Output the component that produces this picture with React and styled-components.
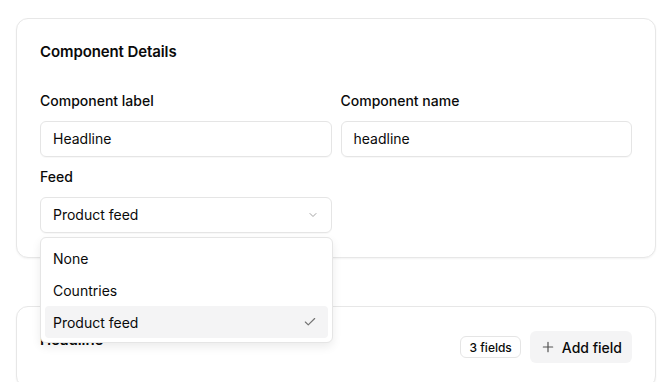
import { useState } from 'react'
import styled, { createGlobalStyle } from 'styled-components'

const Global = createGlobalStyle`
  html, body { margin: 0; padding: 0; background: #ffffff; }
  body { font-family: Inter, "Noto Sans", sans-serif; color: #0a0a0a; -webkit-font-smoothing: antialiased; }
  * { box-sizing: border-box; }
`

const Page = styled.div`
  display: flex;
  flex-direction: column;
  gap: 48px;
  padding: 18px 13px 0 16px;
  height: 382px;
  overflow: hidden;
`

const Card = styled.section`
  background: #fff;
  border: 1px solid #e7e7e7;
  border-radius: 12px;
  box-shadow: 0 1px 2px rgba(0, 0, 0, 0.05);
  padding: 23px 23px 24px;
  display: flex;
  flex-direction: column;
`

const CardHeader = styled.div`
  display: flex;
  align-items: flex-start;
  justify-content: space-between;
  min-height: 20px;
`

const Title = styled.h2`
  margin: 0;
  font-size: 15px;
  font-weight: 600;
  line-height: 20px;
  letter-spacing: -0.1px;
`

const Grid = styled.div`
  display: grid;
  grid-template-columns: 1fr 1fr;
  column-gap: 9px;
  row-gap: 10px;
  margin-top: 29px;
`

const Field = styled.div`
  display: flex;
  flex-direction: column;
  gap: 10px;
  position: relative;
`

const Label = styled.label`
  font-size: 14px;
  font-weight: 500;
  line-height: 20px;
`

const Input = styled.div`
  height: 36px;
  border: 1px solid #e5e5e5;
  border-radius: 6px;
  padding: 0 12px;
  display: flex;
  align-items: center;
  justify-content: space-between;
  font-size: 14px;
  line-height: 20px;
  box-shadow: 0 1px 1px rgba(0, 0, 0, 0.03);
`

const Menu = styled.div`
  position: absolute;
  top: 70px;
  left: 0;
  width: 293px;
  background: #fff;
  border: 1px solid #e5e5e5;
  border-radius: 6px;
  box-shadow: 0 4px 10px rgba(0, 0, 0, 0.08);
  padding: 4px;
  z-index: 10;
`

const Option = styled.div`
  height: 32px;
  display: flex;
  align-items: center;
  justify-content: space-between;
  padding: 0 11px 0 8px;
  border-radius: 4px;
  font-size: 14px;
  background: ${p => (p.$active ? '#f4f4f5' : 'transparent')};
`

const Actions = styled.div`
  display: flex;
  align-items: center;
  gap: 9px;
  margin-top: 1px;
`

const Badge = styled.span`
  height: 22px;
  padding: 0 8px 0 9px;
  border: 1px solid #e5e5e5;
  border-radius: 6px;
  font-size: 12px;
  font-weight: 500;
  display: flex;
  align-items: center;
`

const Button = styled.button`
  height: 32px;
  border: 0;
  border-radius: 6px;
  background: #f4f4f5;
  color: #0a0a0a;
  font-family: inherit;
  font-size: 14px;
  font-weight: 500;
  padding: 0 10px;
  display: flex;
  align-items: center;
  gap: 6px;
`

const Chevron = () => (
  <svg width="12" height="12" viewBox="0 0 24 24" fill="none" stroke="#a3a3a3" strokeWidth="2" strokeLinecap="round" strokeLinejoin="round">
    <path d="m6 9 6 6 6-6" />
  </svg>
)

const Check = () => (
  <svg width="14" height="14" viewBox="0 0 24 24" fill="none" stroke="#737373" strokeWidth="2" strokeLinecap="round" strokeLinejoin="round">
    <path d="M20 6 9 17l-5-5" />
  </svg>
)

const Plus = () => (
  <svg width="16" height="16" viewBox="0 0 24 24" fill="none" stroke="#525252" strokeWidth="1.8" strokeLinecap="round">
    <path d="M5 12h14M12 5v14" />
  </svg>
)

const feeds = ['None', 'Countries', 'Product feed']

export default function App() {
  const [feed] = useState('Product feed')
  return (
    <>
      <Global />
      <Page>
        <Card>
          <CardHeader><Title>Component Details</Title></CardHeader>
          <Grid>
            <Field>
              <Label>Component label</Label>
              <Input>Headline</Input>
            </Field>
            <Field>
              <Label>Component name</Label>
              <Input>headline</Input>
            </Field>
            <Field>
              <Label>Feed</Label>
              <Input>{feed}<Chevron /></Input>
              <Menu>
                {feeds.map(f => (
                  <Option key={f} $active={f === feed}>
                    {f}
                    {f === feed && <Check />}
                  </Option>
                ))}
              </Menu>
            </Field>
          </Grid>
        </Card>
        <Card>
          <CardHeader>
            <Title>Headline</Title>
            <Actions>
              <Badge>3 fields</Badge>
              <Button><Plus />Add field</Button>
            </Actions>
          </CardHeader>
        </Card>
      </Page>
    </>
  )
}
